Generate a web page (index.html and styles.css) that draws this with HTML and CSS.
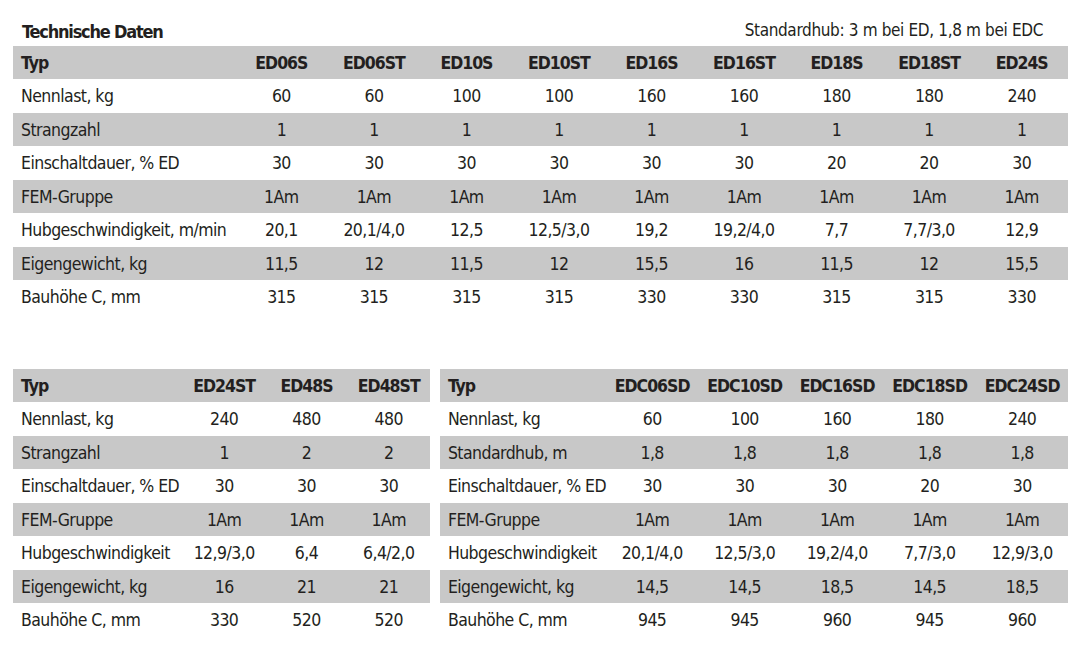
FILE: index.html
```html
<!DOCTYPE html>
<html lang="de">
<head>
<meta charset="utf-8">
<title>Technische Daten</title>
<link rel="stylesheet" href="styles.css">
</head>
<body>
<div class="page">
  <div class="caption">
    <h1 class="title">Technische Daten</h1>
    <span class="note">Standardhub: 3 m bei ED, 1,8 m bei EDC</span>
  </div>

  <table class="spec spec-top">
    <colgroup><col class="c-label"><col span="9" class="c-val"></colgroup>
    <thead>
      <tr><th>Typ</th><th>ED06S</th><th>ED06ST</th><th>ED10S</th><th>ED10ST</th><th>ED16S</th><th>ED16ST</th><th>ED18S</th><th>ED18ST</th><th>ED24S</th></tr>
    </thead>
    <tbody>
      <tr><td>Nennlast, kg</td><td>60</td><td>60</td><td>100</td><td>100</td><td>160</td><td>160</td><td>180</td><td>180</td><td>240</td></tr>
      <tr><td>Strangzahl</td><td>1</td><td>1</td><td>1</td><td>1</td><td>1</td><td>1</td><td>1</td><td>1</td><td>1</td></tr>
      <tr><td>Einschaltdauer, % ED</td><td>30</td><td>30</td><td>30</td><td>30</td><td>30</td><td>30</td><td>20</td><td>20</td><td>30</td></tr>
      <tr><td>FEM-Gruppe</td><td>1Am</td><td>1Am</td><td>1Am</td><td>1Am</td><td>1Am</td><td>1Am</td><td>1Am</td><td>1Am</td><td>1Am</td></tr>
      <tr><td>Hubgeschwindigkeit, m/min</td><td>20,1</td><td>20,1/4,0</td><td>12,5</td><td>12,5/3,0</td><td>19,2</td><td>19,2/4,0</td><td>7,7</td><td>7,7/3,0</td><td>12,9</td></tr>
      <tr><td>Eigengewicht, kg</td><td>11,5</td><td>12</td><td>11,5</td><td>12</td><td>15,5</td><td>16</td><td>11,5</td><td>12</td><td>15,5</td></tr>
      <tr><td>Bauhöhe C, mm</td><td>315</td><td>315</td><td>315</td><td>315</td><td>330</td><td>330</td><td>315</td><td>315</td><td>330</td></tr>
    </tbody>
  </table>

  <div class="bottom">
    <table class="spec spec-left">
      <colgroup><col class="c-label-l"><col span="3" class="c-val-l"></colgroup>
      <thead>
        <tr><th>Typ</th><th>ED24ST</th><th>ED48S</th><th>ED48ST</th></tr>
      </thead>
      <tbody>
        <tr><td>Nennlast, kg</td><td>240</td><td>480</td><td>480</td></tr>
        <tr><td>Strangzahl</td><td>1</td><td>2</td><td>2</td></tr>
        <tr><td>Einschaltdauer, % ED</td><td>30</td><td>30</td><td>30</td></tr>
        <tr><td>FEM-Gruppe</td><td>1Am</td><td>1Am</td><td>1Am</td></tr>
        <tr><td>Hubgeschwindigkeit</td><td>12,9/3,0</td><td>6,4</td><td>6,4/2,0</td></tr>
        <tr><td>Eigengewicht, kg</td><td>16</td><td>21</td><td>21</td></tr>
        <tr><td>Bauhöhe C, mm</td><td>330</td><td>520</td><td>520</td></tr>
      </tbody>
    </table>

    <table class="spec spec-right">
      <colgroup><col class="c-label-r"><col span="5" class="c-val"></colgroup>
      <thead>
        <tr><th>Typ</th><th>EDC06SD</th><th>EDC10SD</th><th>EDC16SD</th><th>EDC18SD</th><th>EDC24SD</th></tr>
      </thead>
      <tbody>
        <tr><td>Nennlast, kg</td><td>60</td><td>100</td><td>160</td><td>180</td><td>240</td></tr>
        <tr><td>Standardhub, m</td><td>1,8</td><td>1,8</td><td>1,8</td><td>1,8</td><td>1,8</td></tr>
        <tr><td>Einschaltdauer, % ED</td><td>30</td><td>30</td><td>30</td><td>20</td><td>30</td></tr>
        <tr><td>FEM-Gruppe</td><td>1Am</td><td>1Am</td><td>1Am</td><td>1Am</td><td>1Am</td></tr>
        <tr><td>Hubgeschwindigkeit</td><td>20,1/4,0</td><td>12,5/3,0</td><td>19,2/4,0</td><td>7,7/3,0</td><td>12,9/3,0</td></tr>
        <tr><td>Eigengewicht, kg</td><td>14,5</td><td>14,5</td><td>18,5</td><td>14,5</td><td>18,5</td></tr>
        <tr><td>Bauhöhe C, mm</td><td>945</td><td>945</td><td>960</td><td>945</td><td>960</td></tr>
      </tbody>
    </table>
  </div>
</div>
</body>
</html>
```

FILE: styles.css
```css
html, body {
  margin: 0;
  padding: 0;
  background: #ffffff;
}

body {
  font-family: "DejaVu Sans Condensed", "Liberation Sans", sans-serif;
  color: #231f20;
}

.page {
  width: 1055px;
  padding: 0 0 0 13px;
}

.caption {
  display: flex;
  justify-content: space-between;
  align-items: flex-end;
  height: 46px;
  padding: 0 25px 0 9px;
  box-sizing: border-box;
}

.title {
  margin: 0 0 4px;
  font-size: 18px;
  font-weight: bold;
  line-height: 20px;
  letter-spacing: -1.2px;
}

.note {
  margin-bottom: 6px;
  font-size: 17px;
  line-height: 20px;
  letter-spacing: -0.35px;
}

.spec {
  border-collapse: collapse;
  table-layout: fixed;
  font-size: 17.5px;
  letter-spacing: -0.55px;
}

.spec-top {
  width: 1055px;
}

.c-label { width: 222px; }
.c-val { width: 92.5px; }
.c-label-l { width: 170px; }
.c-val-l { width: 82.3px; }
.c-label-r { width: 166px; }

.spec th,
.spec td {
  padding: 0;
  text-align: center;
  white-space: nowrap;
  font-weight: normal;
}

.spec th {
  font-weight: bold;
  letter-spacing: -1px;
}

.spec th:first-child,
.spec td:first-child {
  text-align: left;
  padding-left: 8px;
}

.spec thead tr,
.spec tbody tr:nth-child(even) {
  background: #c8c8c8;
  height: 33px;
}

.spec tbody tr:nth-child(odd) {
  height: 34px;
}

.bottom {
  display: flex;
  gap: 10px;
  margin-top: 55px;
}

.spec-left {
  width: 417px;
}

.spec-right {
  width: 628px;
}
```
